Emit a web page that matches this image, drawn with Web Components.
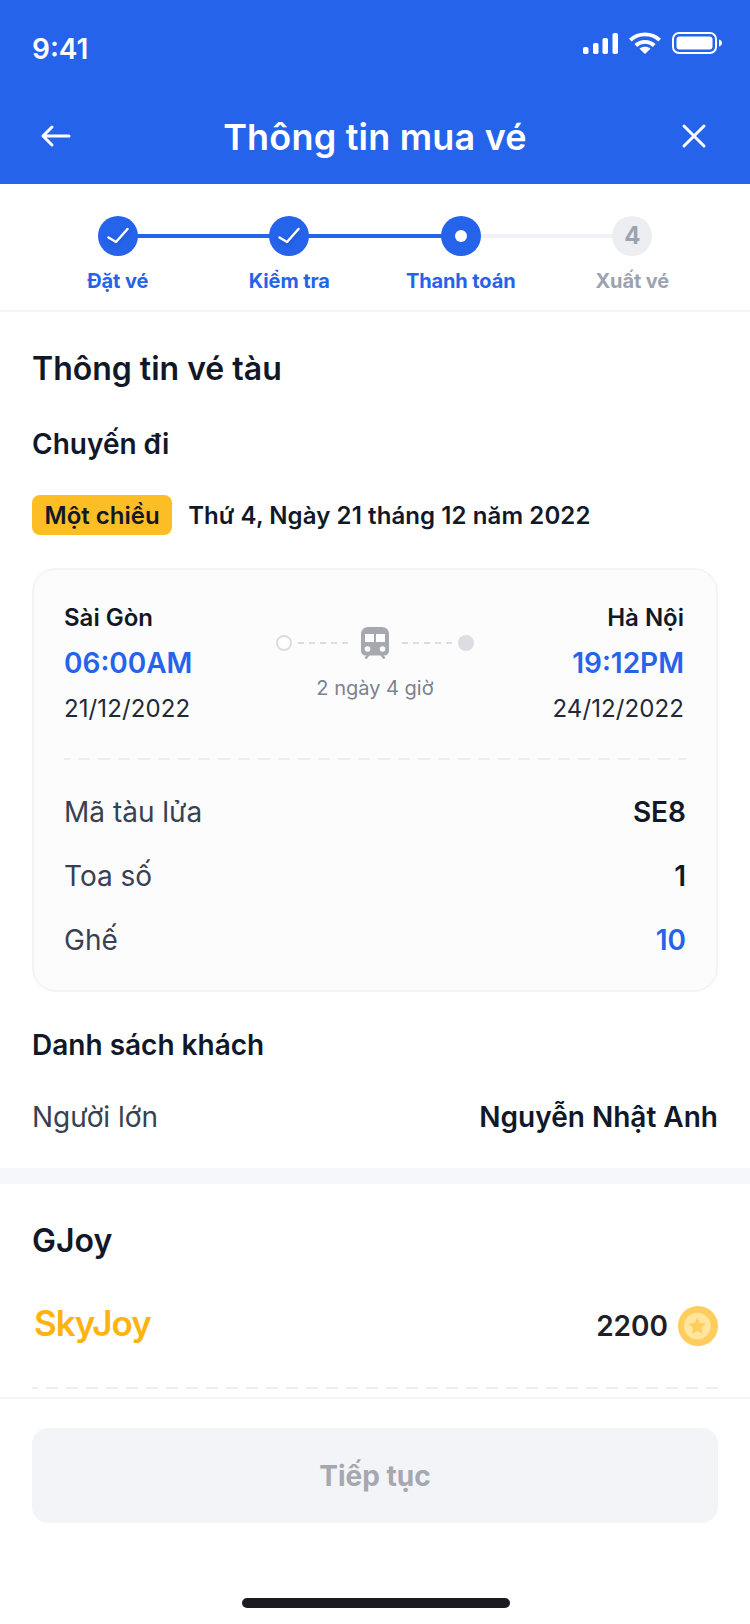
<!DOCTYPE html>
<html lang="vi">
<head>
<meta charset="utf-8">
<title>Thông tin mua vé</title>
<style>
  html, body { margin: 0; padding: 0; background: #fff; }
  body {
    width: 750px;
    height: 1624px;
    overflow: hidden;
    display: flex;
    flex-direction: column;
    font-family: Inter, "Liberation Sans", sans-serif;
    color: #111827;
  }
  app-header { flex: none; }
  step-bar { flex: none; }
  main { flex: 1; min-height: 0; overflow: hidden; display: block; }
  app-footer { flex: none; }
</style>
</head>
<body>
  <app-header title="Thông tin mua vé" time="9:41"></app-header>
  <step-bar>
    <step-item state="done" label="Đặt vé"></step-item>
    <step-item state="done" label="Kiểm tra"></step-item>
    <step-item state="current" label="Thanh toán"></step-item>
    <step-item state="todo" label="Xuất vé" num="4" last></step-item>
  </step-bar>
  <main>
    <ticket-section></ticket-section>
    <points-section></points-section>
  </main>
  <app-footer label="Tiếp tục"></app-footer>

<script>
class AppHeader extends HTMLElement {
  constructor() {
    super();
    this.attachShadow({ mode: 'open' });
    this.shadowRoot.innerHTML = `
      <style>
        :host { display: block; background: #2563eb; color: #fff; height: 184px; }
        .status {
          height: 100px;
          box-sizing: border-box;
          padding: 32px 28px 0 32px;
          display: flex;
          justify-content: space-between;
          align-items: flex-start;
        }
        .time { font-size: 28px; font-weight: 600; line-height: 34px; }
        .icons { display: flex; align-items: center; gap: 11px; }
        .icons svg { display: block; }
        .nav {
          height: 84px;
          padding: 0 8px 12px;
          box-sizing: border-box;
          display: flex;
          align-items: center;
          justify-content: space-between;
        }
        .nav svg { display: block; }
        .nav svg.back { margin: 0 0 0 32px; }
        .nav svg.close { margin: 0 32px 0 0; }
        h1 { margin: 2px 0 0; font-size: 36px; line-height: 44px; font-weight: 600; letter-spacing: 0.2px; }
      </style>
      <div class="status">
        <span class="time">${this.getAttribute('time')}</span>
        <span class="icons">
          <svg width="35" height="21" viewBox="0 0 35 21" fill="#fff">
            <rect x="0" y="14" width="5.500" height="7" rx="1.800"/>
            <rect x="10" y="10" width="5.500" height="11" rx="1.800"/>
            <rect x="19.500" y="5" width="5.500" height="16" rx="1.800"/>
            <rect x="29.500" y="0" width="5.500" height="21" rx="1.800"/>
          </svg>
          <svg width="32" height="22" viewBox="0 0 32 22" fill="none" stroke="#fff" stroke-width="3.800">
            <path d="M1.300 8.200C9.500 0.400 22.500 0.400 30.700 8.200"/>
            <path d="M6.800 13.500C12 8.700 20 8.700 25.200 13.500"/>
            <path d="M16 22l-5.500-5.300c3.200-2.500 7.800-2.500 11 0z" fill="#fff" stroke="none"/>
          </svg>
          <svg width="50" height="22" viewBox="0 0 50 22" fill="none">
            <rect x="1" y="1" width="43" height="20" rx="6" stroke="#fff" stroke-width="2"/>
            <rect x="4.500" y="4.500" width="36" height="13" rx="3" fill="#fff"/>
            <path d="M47 7.500c1.800.5 3 1.800 3 3.500s-1.200 3-3 3.500z" fill="#fff"/>
          </svg>
        </span>
      </div>
      <div class="nav">
        <svg class="back" width="32" height="32" viewBox="0 0 32 32" fill="none" stroke="#fff" stroke-width="3" stroke-linecap="round" stroke-linejoin="round">
          <path d="M29 16H3M12 7l-9 9 9 9"/>
        </svg>
        <h1>${this.getAttribute('title')}</h1>
        <svg class="close" width="32" height="32" viewBox="0 0 32 32" fill="none" stroke="#fff" stroke-width="3" stroke-linecap="round">
          <path d="M6 6l20 20M26 6L6 26"/>
        </svg>
      </div>
    `;
  }
}

class StepBar extends HTMLElement {
  constructor() {
    super();
    this.attachShadow({ mode: 'open' });
    this.shadowRoot.innerHTML = `
      <style>
        :host {
          display: grid;
          grid-template-columns: repeat(4, 171.500px);
          justify-content: center;
          height: 128px;
          box-sizing: border-box;
          padding-top: 32px;
          border-bottom: 2px solid #f3f4f6;
          background: #fff;
        }
      </style>
      <slot></slot>
    `;
  }
}

class StepItem extends HTMLElement {
  constructor() {
    super();
    this.attachShadow({ mode: 'open' });
    const state = this.getAttribute('state');
    const last = this.hasAttribute('last');
    const mark = state === 'done'
      ? `<svg width="24" height="24" viewBox="0 0 24 24" fill="none" stroke="#fff" stroke-width="2.500" stroke-linecap="round" stroke-linejoin="round" style="filter:drop-shadow(0 2px 2px rgba(10,40,140,.3))"><path d="M2.500 13.500l7.500 4.500L21.500 5"/></svg>`
      : state === 'current'
        ? `<span class="dot"></span>`
        : `<span class="num">${this.getAttribute('num')}</span>`;
    this.shadowRoot.innerHTML = `
      <style>
        :host { display: flex; flex-direction: column; align-items: center; position: relative; }
        .line {
          position: absolute;
          left: 50%;
          top: 18px;
          width: 100%;
          height: 4px;
          background: ${state === 'current' ? '#f0f1f5' : '#2563eb'};
        }
        .circle {
          position: relative;
          width: 40px;
          height: 40px;
          border-radius: 50%;
          background: ${state === 'todo' ? '#eceef2' : '#2563eb'};
          display: flex;
          align-items: center;
          justify-content: center;
        }
        .dot { width: 12px; height: 12px; border-radius: 50%; background: #fff; }
        .num { font-size: 24px; font-weight: 700; color: #9ca3af; line-height: 1; }
        .label {
          margin-top: 11px;
          font-size: 20px;
          line-height: 28px;
          font-weight: 700;
          letter-spacing: -0.1px;
          white-space: nowrap;
          color: ${state === 'todo' ? '#9ca3af' : '#2563eb'};
        }
      </style>
      ${last ? '' : '<span class="line"></span>'}
      <span class="circle">${mark}</span>
      <span class="label">${this.getAttribute('label')}</span>
    `;
  }
}

class InfoRow extends HTMLElement {
  constructor() {
    super();
    this.attachShadow({ mode: 'open' });
    this.shadowRoot.innerHTML = `
      <style>
        :host {
          display: flex;
          justify-content: space-between;
          align-items: center;
          font-size: 28px;
          line-height: 36px;
          color: #374151;
        }
        .value { font-weight: 600; color: var(--value-color, #111827); }
      </style>
      <span><slot name="label"></slot></span>
      <span class="value"><slot name="value"></slot></span>
    `;
  }
}

class DashRule extends HTMLElement {
  constructor() {
    super();
    this.attachShadow({ mode: 'open' });
    this.shadowRoot.innerHTML = `
      <style>
        :host {
          display: block;
          height: 2px;
          background: linear-gradient(90deg, #eceef4 12px, transparent 12px) -6px 0 / 20px 2px repeat-x;
        }
      </style>
    `;
  }
}

class RouteGraphic extends HTMLElement {
  constructor() {
    super();
    this.attachShadow({ mode: 'open' });
    this.shadowRoot.innerHTML = `
      <style>
        :host { display: flex; flex-direction: column; align-items: center; }
        .track { display: flex; align-items: center; gap: 6px; height: 34px; }
        .start { width: 16px; height: 16px; box-sizing: border-box; border: 2px solid #dcdde2; border-radius: 50%; background: #fff; }
        .end { width: 16px; height: 16px; border-radius: 50%; background: #dcdde2; }
        .dash { width: 50px; height: 0; border-top: 2px dashed #dcdde2; }
        svg { display: block; margin: 0 7px; }
        .duration { margin-top: 15px; font-size: 20px; line-height: 26px; color: #7b8190; }
      </style>
      <div class="track">
        <span class="start"></span>
        <span class="dash"></span>
        <svg width="28" height="32" viewBox="0 0 28 32">
          <path fill="#a5a8af" d="M7 0h14c4 0 7 3 7 7v17c0 2.500-2 4.500-4.500 4.500h-19C2 28.500 0 26.500 0 24V7c0-4 3-7 7-7z"/>
          <rect x="4" y="7" width="9" height="8" fill="#fcfcfc"/>
          <rect x="15" y="7" width="9" height="8" fill="#fcfcfc"/>
          <circle cx="6.500" cy="22" r="2.800" fill="#fcfcfc"/>
          <circle cx="21.500" cy="22" r="2.800" fill="#fcfcfc"/>
          <path fill="none" stroke="#a5a8af" stroke-width="2.500" d="M8 27l-3.500 4.500M20 27l3.500 4.500"/>
        </svg>
        <span class="dash"></span>
        <span class="end"></span>
      </div>
      <span class="duration">${this.getAttribute('duration')}</span>
    `;
  }
}

class TripCard extends HTMLElement {
  constructor() {
    super();
    this.attachShadow({ mode: 'open' });
    this.shadowRoot.innerHTML = `
      <style>
        :host {
          display: block;
          box-sizing: border-box;
          padding: 32px 30px 32px;
          background: #fcfcfc;
          border: 2px solid #f3f4f6;
          border-radius: 24px;
        }
        .route { display: grid; grid-template-columns: 1fr auto 1fr; height: 156px; }
        .stop { display: flex; flex-direction: column; }
        .stop.to { align-items: flex-end; padding-right: 2px; }
        .city { font-size: 24px; line-height: 32px; font-weight: 600; color: #111827; }
        .time { margin-top: 11px; font-size: 28px; line-height: 36px; font-weight: 600; color: #2563eb; }
        .date { margin-top: 12px; font-size: 24px; line-height: 32px; color: #1f2937; letter-spacing: 0.1px; }
        route-graphic { margin-top: 24px; }
        .rows { display: grid; row-gap: 28px; margin-top: 34px; }
      </style>
      <div class="route">
        <div class="stop"><span class="city">Sài Gòn</span><span class="time">06:00AM</span><span class="date">21/12/2022</span></div>
        <route-graphic duration="2 ngày 4 giờ"></route-graphic>
        <div class="stop to"><span class="city">Hà Nội</span><span class="time">19:12PM</span><span class="date">24/12/2022</span></div>
      </div>
      <dash-rule></dash-rule>
      <div class="rows"><slot></slot></div>
    `;
  }
}

class TicketSection extends HTMLElement {
  constructor() {
    super();
    this.attachShadow({ mode: 'open' });
    this.shadowRoot.innerHTML = `
      <style>
        :host {
          display: block;
          padding: 35px 32px 33px;
          border-bottom: 16px solid #f6f7fb;
          background: #fff;
        }
        h2 { margin: 0; font-size: 32px; line-height: 44px; font-weight: 600; color: #111827; }
        h3 { margin: 35px 0 0; font-size: 28px; line-height: 36px; font-weight: 600; color: #111827; }
        .when { display: flex; align-items: center; gap: 16px; margin-top: 33px; height: 40px; }
        .badge {
          background: #fdbd24;
          border-radius: 8px;
          height: 40px;
          padding: 0 12.500px;
          display: flex;
          align-items: center;
          font-size: 24px;
          font-weight: 600;
          color: #111827;
        }
        .date { font-size: 24px; font-weight: 600; color: #111827; letter-spacing: 0.1px; }
        trip-card { margin-top: 33px; }
        .adult { margin-top: 36px; }
      </style>
      <h2>Thông tin vé tàu</h2>
      <h3>Chuyến đi</h3>
      <div class="when"><span class="badge">Một chiều</span><span class="date">Thứ 4, Ngày 21 tháng 12 năm 2022</span></div>
      <trip-card>
        <info-row><span slot="label">Mã tàu lửa</span><span slot="value">SE8</span></info-row>
        <info-row><span slot="label">Toa số</span><span slot="value">1</span></info-row>
        <info-row style="--value-color:#2563eb"><span slot="label">Ghế</span><span slot="value">10</span></info-row>
      </trip-card>
      <h3>Danh sách khách</h3>
      <info-row class="adult"><span slot="label">Người lớn</span><span slot="value">Nguyễn Nhật Anh</span></info-row>
    `;
  }
}

class PointsSection extends HTMLElement {
  constructor() {
    super();
    this.attachShadow({ mode: 'open' });
    this.shadowRoot.innerHTML = `
      <style>
        :host { display: block; padding: 35px 32px 0; background: #fff; }
        h2 { margin: 0; font-size: 32px; line-height: 44px; font-weight: 600; color: #111827; }
        .row { display: flex; justify-content: space-between; align-items: center; margin-top: 41px; height: 44px; }
        .logo {
          font-size: 35px;
          font-weight: 600;
          letter-spacing: -1px;
          color: #ffb30f;
          line-height: 44px;
          margin: 0 0 7px 2px;
        }
        .balance { display: flex; align-items: center; gap: 10px; font-size: 28px; font-weight: 600; color: #1f2026; }
        svg { display: block; }
        dash-rule { margin-top: 39px; }
      </style>
      <h2>GJoy</h2>
      <div class="row">
        <span class="logo">SkyJoy</span>
        <span class="balance">2200
          <svg width="40" height="40" viewBox="0 0 40 40">
            <circle cx="20" cy="20" r="20" fill="#ffcd5c"/>
            <circle cx="19.300" cy="20" r="13.300" fill="#ffe59e"/>
            <path fill="#ffcd5c" d="M19.300 11.500l2.600 5.400 5.900.8-4.300 4.100 1 5.900-5.200-2.800-5.200 2.800 1-5.900-4.300-4.100 5.900-.8z"/>
          </svg>
        </span>
      </div>
      <dash-rule></dash-rule>
    `;
  }
}

class AppFooter extends HTMLElement {
  constructor() {
    super();
    this.attachShadow({ mode: 'open' });
    this.shadowRoot.innerHTML = `
      <style>
        :host {
          display: block;
          box-sizing: border-box;
          height: 227px;
          padding: 29px 32px 0;
          border-top: 2px solid #f3f4f6;
          background: #fff;
        }
        button {
          display: block;
          width: 100%;
          height: 95px;
          border: 0;
          border-radius: 16px;
          background: #f3f4f8;
          color: #a5a8af;
          font: 700 28px Inter, "Liberation Sans", sans-serif;
        }
        .home { width: 268px; height: 10px; border-radius: 5px; background: #1b1c20; margin: 75px 0 0 210px; }
      </style>
      <button type="button">${this.getAttribute('label')}</button>
      <div class="home"></div>
    `;
  }
}

customElements.define('app-header', AppHeader);
customElements.define('step-bar', StepBar);
customElements.define('step-item', StepItem);
customElements.define('info-row', InfoRow);
customElements.define('dash-rule', DashRule);
customElements.define('route-graphic', RouteGraphic);
customElements.define('trip-card', TripCard);
customElements.define('ticket-section', TicketSection);
customElements.define('points-section', PointsSection);
customElements.define('app-footer', AppFooter);
</script>
</body>
</html>
